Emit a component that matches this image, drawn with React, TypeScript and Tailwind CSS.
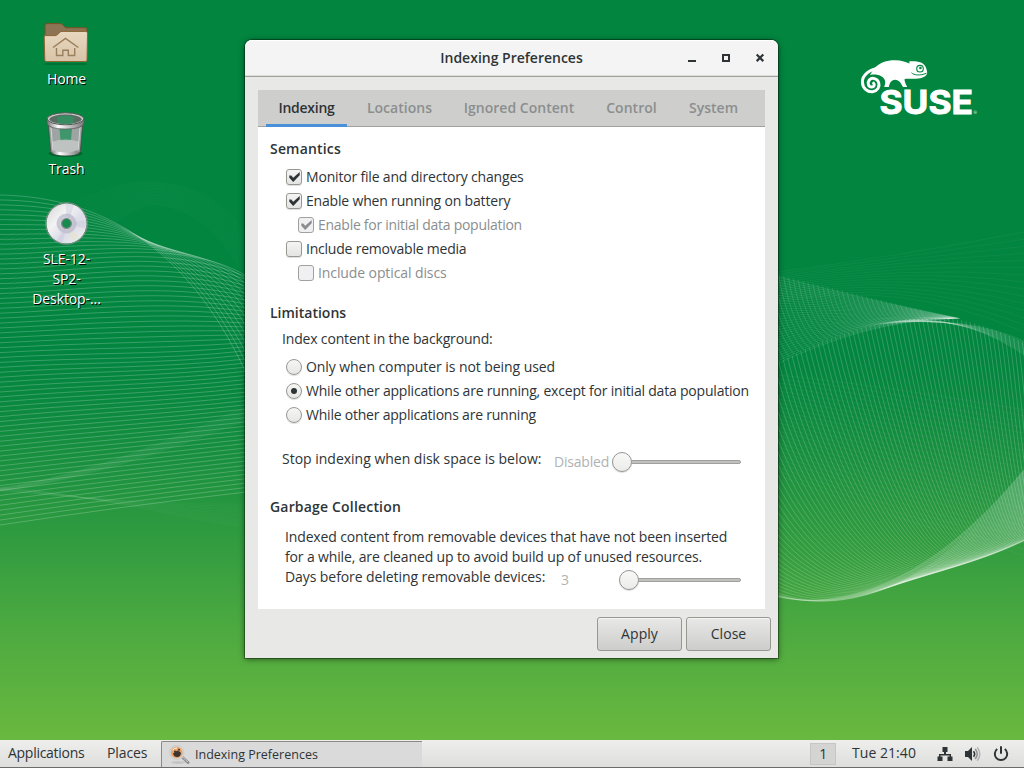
import type { ReactNode } from "react";

const lerp = (a: number, b: number, t: number) => a + (b - a) * t;
const range = (n: number) => Array.from({ length: n }, (_, i) => i / (n - 1));

const leftMesh = range(68).map((t) => {
  const y0 = 195 + 330 * t;
  const yEnd = t < 0.2 ? 275 + 98 * ((0.2 - t) / 0.2) ** 1.4 : 275 + 217 * ((t - 0.2) / 0.8) ** 1.1;
  const endSlope = t < 0.2 ? lerp(2, 0.5, t / 0.2) : lerp(0.5, -0.13, Math.min(1, (t - 0.2) / 0.3));
  const startSlope = lerp(0.02, -0.15, t);
  return `M0 ${y0} C82 ${y0 + 82 * startSlope} ${t < 0.2 ? 180 : 163} ${yEnd - 72 * endSlope} 246 ${yEnd}`;
});

const leftArcs = range(16).map(
  (t) => `M0 ${240 + t * 60} C60 ${212 + t * 60} 105 ${182 + t * 36} 150 ${182 + t * 22} C195 ${183 + t * 24} 225 ${204 + t * 30} 250 ${238 + t * 50}`,
);

const leftTail = range(12).map((t) => `M0 ${487 + t * 4} C90 ${494 + t * 4} 160 ${515 - t * 10} 250 ${528 - t * 24}`);
const leftRise = range(14).map((t) => `M0 ${488 + t * 3} C90 ${474 + t * 5} 170 ${440 + t * 10} 250 ${405 + t * 14}`);

const crest = (x: number) => (x < 940 ? 318 + ((940 - x) / 162) ** 2 * 45 : 318 + ((x - 940) / 84) ** 1.7 * 25);

const rightMesh = range(100).map((s) => {
  const x = 640 + 430 * s;
  const y = crest(Math.max(x, 660));
  return `M${x} ${y} C${x + lerp(40, 5, s)} ${y + lerp(150, 50, s)} ${860 + 215 * s ** 1.4} ${698 + 130 * s - 270 * s * s} 1050 ${lerp(436, 513, s)}`;
});

const crestLines = range(9).map((u) => `M${880 + u * 30} ${crest(880 + u * 30)} Q${965 + u * 8} ${314 + u * 5} 1026 ${342 + u * 14}`);

const wedgeMesh = range(34).map((u) => `M770 ${275 + 92 * u} Q${lerp(860, 865, u)} ${lerp(298, 321, u)} ${lerp(960, 950, u)} 318.5`);
const wedgeCross = range(40).map((u) => {
  const x = 730 + 190 * u;
  return `M${x} ${275 + (x - 778) * 0.245} Q${x + 8} ${325 + u * 5} ${x + 30} ${crest(x + 30)}`;
});

const faintRight = range(15).map((t) => `M778 ${272 + t * 30} Q900 ${256 + t * 22} 1024 ${232 + t * 100}`);
const faintBand = range(26).map((t) => `M778 ${375 + t * 100} Q880 ${385 + t * 130} 1024 ${410 + t * 145}`);

function Lines({ paths, opacity }: { paths: string[]; opacity: number }) {
  return (
    <g fill="none" stroke="#fff" strokeWidth="0.8" strokeOpacity={opacity}>
      {paths.map((d, i) => (
        <path key={i} d={d} />
      ))}
    </g>
  );
}

function SuseLogo() {
  return (
    <g fill="#fff">
      <path d="M874 68.5 C880 62 888 60 896 60.3 C901 60.5 905 61.8 909.5 63.6 L909.3 61.2 C914 61 918 61.3 921 62.6 C925 64.5 926.8 68 927.2 73 C926.8 76.5 922 78.5 916 78.7 C911 79 906 78.4 904.5 79.2 C904.5 82 906.2 84.5 907.2 87 L903 87 C901 83.5 899.5 80 895 79.8 C891 80 889.5 83.5 888.8 87 L884.2 87 C885 84 886 82 884.5 79.5 C883 76 877 73.5 870 75 Z" />
      <path
        d="M881 68.5 C869 68 862.2 76 862.4 82 C862.6 89 868 92.3 872.5 91.8 C877.5 91 880 86.8 878.7 82.6 C877.3 78.4 872 77 869.3 80 C866.8 83.3 868.6 87 871.8 87 C874 86.9 875 84.6 873.6 83.2"
        fill="none"
        stroke="#fff"
        strokeWidth="3"
        strokeLinecap="round"
      />
      <path d="M911.5 72.8 C914 75.2 920 76 926.5 73.2" fill="none" stroke="#02853f" strokeWidth="1" />
      <circle cx="920" cy="68.7" r="3.3" fill="#fff" stroke="#02853f" strokeWidth="1.1" />
      <circle cx="920.4" cy="68" r="1.3" fill="#02853f" />
      <text x="879.5" y="113.5" textLength="93.5" lengthAdjust="spacingAndGlyphs" stroke="#fff" strokeWidth="0.9" className="font-['Inter'] text-[32.5px] font-bold tracking-normal">
        SUSE
      </text>
      <text x="973.5" y="114" className="font-['Open_Sans'] text-[4px]">®</text>
    </g>
  );
}

function Wallpaper() {
  return (
    <svg className="absolute inset-0" width="1024" height="768" viewBox="0 0 1024 768">
      <defs>
        <linearGradient id="sky" x1="0" y1="0" x2="0" y2="1">
          <stop offset="0" stopColor="#02853f" />
          <stop offset="0.46" stopColor="#02853f" />
          <stop offset="0.52" stopColor="#09883f" />
          <stop offset="0.62" stopColor="#1e923f" />
          <stop offset="0.73" stopColor="#379f40" />
          <stop offset="0.82" stopColor="#4daa40" />
          <stop offset="0.96" stopColor="#69b83f" />
          <stop offset="1" stopColor="#69b83f" />
        </linearGradient>
      </defs>
      <rect width="1024" height="768" fill="url(#sky)" />
      <Lines paths={leftMesh} opacity={0.27} />
      <Lines paths={leftArcs} opacity={0.04} />
      <Lines paths={leftTail} opacity={0.04} />
      <Lines paths={leftRise} opacity={0.05} />
      <Lines paths={rightMesh} opacity={0.23} />
      <Lines paths={crestLines} opacity={0.16} />
      <Lines paths={wedgeMesh} opacity={0.13} />
      <Lines paths={wedgeCross} opacity={0.17} />
      <Lines paths={faintRight} opacity={0.06} />
      <Lines paths={faintBand} opacity={0.05} />
      <SuseLogo />
    </svg>
  );
}

function HomeIcon() {
  return (
    <svg className="mr-px" width="48" height="48" viewBox="0 0 48 48">
      <defs>
        <linearGradient id="folder" x1="0" y1="0" x2="0" y2="1">
          <stop offset="0" stopColor="#e8d8c0" />
          <stop offset="1" stopColor="#d8c4a8" />
        </linearGradient>
      </defs>
      <g transform="translate(-0.5 -1)">
        <path d="M3 46 h42" stroke="#00602c" strokeWidth="2" opacity=".5" />
        <path d="M3.5 7.5 q0-1.9 1.9-1.9 H19 q1.2 0 2 .9 L24 9.7 h20 q1.4 0 1.4 1.4 V24 H3.5 Z" fill="#8c7455" stroke="#7a4f22" />
        <path d="M4 17.6 H13.5 q1.5 0 2.5-1 l2.6-2.5 q.8-.7 2-.7 H44.2 q1.8 0 1.8 1.8 L45.5 42 q0 1.5-1.6 1.5 H4.8 q-1.5 0-1.5-1.5 L2.7 19 q0-1.4 1.3-1.4 Z" fill="url(#folder)" stroke="#8d6432" />
        <path d="M11.5 29.5 L24 20.5 L36.8 29.5" fill="none" stroke="#997f5d" strokeWidth="1.5" />
        <path d="M15 30 v7.5 h6.3 v-5.3 h5.5 v5.3 h6.4 V30" fill="none" stroke="#997f5d" strokeWidth="1.4" />
      </g>
    </svg>
  );
}

function TrashIcon() {
  return (
    <svg className="mr-px" width="48" height="48" viewBox="0 0 48 48">
      <defs>
        <linearGradient id="rim" x1="0" x2="1">
          <stop offset="0" stopColor="#777" />
          <stop offset=".3" stopColor="#fff" />
          <stop offset=".6" stopColor="#c4c4c4" />
          <stop offset="1" stopColor="#777" />
        </linearGradient>
        <pattern id="wire" width="2" height="2" patternUnits="userSpaceOnUse">
          <rect width="1" height="1" fill="#4f5a54" />
          <rect x="1" y="1" width="1" height="1" fill="#4f5a54" />
        </pattern>
      </defs>
      <g transform="translate(-0.5 0.5)">
        <ellipse cx="24" cy="44" rx="17" ry="3.5" fill="#003d1b" opacity=".45" />
        <path d="M6.5 11 L9.2 42 q2 4 14.8 4 t14.8-4 L41.5 11 Z" fill="#b4bab7" stroke="#444" strokeWidth=".8" />
        <path d="M18 19 h12.5 l-1 12 H19 Z" fill="#25a468" opacity=".85" />
        <path d="M11 32 q13-4 26 0 l-1 9 q-12 5-24 0 Z" fill="#ececec" opacity=".75" />
        <path d="M7 14 L9.2 42 q2 4 14.8 4 t14.8-4 L41 14 Z" fill="url(#wire)" opacity=".45" />
        <path d="M9.8 40 q14.2 6 28.4 0 l-.4 3 q-3 3-13.8 3 t-13.8-3 Z" fill="url(#rim)" />
        <path d="M9.5 18 l2 24 M38.5 18 l-2 24" stroke="#fff" opacity=".55" />
        <path d="M5.5 9.5 v4 q1 6 18.5 6 t18.5-6 v-4 Z" fill="url(#rim)" stroke="#555" strokeWidth=".7" />
        <ellipse cx="24" cy="9.3" rx="18.3" ry="6" fill="#c9cccb" stroke="#555" strokeWidth="1" />
        <ellipse cx="24" cy="9.8" rx="16" ry="4.7" fill="#5f7368" />
        <path d="M15 7.5 q9-2.5 18 0 l-1.5 6.3 q-7.5 1.2-15 0 Z" fill="#2f9c66" />
        <ellipse cx="24" cy="9.8" rx="16" ry="4.7" fill="url(#wire)" opacity=".5" />
      </g>
    </svg>
  );
}

function DiscIcon() {
  return (
    <svg className="mr-px" width="48" height="48" viewBox="0 0 48 48">
      <defs>
        <linearGradient id="disc" x1="0" y1="0" x2="1" y2="1">
          <stop offset="0" stopColor="#d4d4d6" />
          <stop offset=".35" stopColor="#f3f3f4" />
          <stop offset=".6" stopColor="#dcdce8" />
          <stop offset="1" stopColor="#f0f0ee" />
        </linearGradient>
      </defs>
      <g transform="translate(0.5 0)">
        <circle cx="24" cy="24.5" r="20" fill="url(#disc)" />
        <path d="M24.5 24.5 L23 4 A20.5 20.5 0 0 1 32 5.5 Z M24.5 24.5 L44 21 A20.5 20.5 0 0 1 44 30 Z M24.5 24.5 L14 42 A20.5 20.5 0 0 0 20 44.5 Z" fill="#c5c4d6" opacity=".4" />
        <path d="M25 25 L36 38 L30 42 Z" fill="#e6e3c4" opacity=".6" />
        <circle cx="24" cy="24.5" r="20.8" fill="none" stroke="#8b8b8b" />
        <circle cx="24" cy="24.5" r="8" fill="none" stroke="#b9b8ca" strokeWidth="4" opacity=".7" />
        <circle cx="24" cy="24.5" r="5" fill="#168b50" stroke="#8a8a8a" strokeWidth="1.2" />
      </g>
    </svg>
  );
}

function DesktopItem({ icon, lines }: { icon: ReactNode; lines: string[] }) {
  return (
    <div className="flex w-[101px] flex-col items-center">
      {icon}
      <div className="mt-[2px] text-center text-[14px] leading-[20px] tracking-[-0.1px] text-white [text-shadow:1px_1px_0_#000]">
        {lines.map((l) => (
          <div key={l}>{l}</div>
        ))}
      </div>
    </div>
  );
}

type CheckProps = { label: string; checked?: boolean; disabled?: boolean; indent?: boolean; className?: string };

function Check({ label, checked, disabled, indent, className = "" }: CheckProps) {
  return (
    <div className={`flex h-6 items-center gap-1 ${indent ? "pl-10" : "pl-7"} ${disabled ? "text-[#8b8e8f]" : ""}`}>
      <span
        className={`flex size-4 items-center justify-center rounded-[3px] border ${
          disabled ? "border-[#a0a09e] bg-[#f0f0f2]" : "border-[#989893] bg-linear-to-b from-[#f5f5f4] to-[#e4e4e2] shadow-[0_1px_1px_#00000022]"
        }`}
      >
        {checked && (
          <svg width="14" height="14" viewBox="0 0 14 14">
            <path d="M2.3 5.6 H4.3 L6.2 7.7 L12.7 2 V5.2 L6.2 12 L2.3 7.8 Z" fill={disabled ? "#8b8e8f" : "#2e3436"} />
          </svg>
        )}
      </span>
      <span className={`leading-[20px] whitespace-nowrap ${className}`}>{label}</span>
    </div>
  );
}

function Radio({ label, on, className = "" }: { label: string; on?: boolean; className?: string }) {
  return (
    <div className="flex h-6 items-center gap-1 pl-7">
      <span className="flex size-4 items-center justify-center rounded-full border border-[#989893] bg-linear-to-b from-[#f6f6f5] to-[#e6e6e4] shadow-[0_1px_1px_#00000022]">
        {on && <span className="size-1.5 rounded-full bg-[#2e3436]" />}
      </span>
      <span className={`leading-[20px] whitespace-nowrap ${className}`}>{label}</span>
    </div>
  );
}

function Slider({ className }: { className: string }) {
  return (
    <div className={`flex items-center ${className}`}>
      <span className="size-5 shrink-0 rounded-full border border-[#949490] bg-linear-to-b from-[#f8f8f7] to-[#ececea] shadow-[0_1px_1px_#00000026]" />
      <span className="-ml-px h-1 flex-1 rounded-r-full border border-[#a0a09c] bg-[#c0c0be]" />
    </div>
  );
}

function Heading({ children, className = "tracking-[0.18px]" }: { children: ReactNode; className?: string }) {
  return <h2 className={`h-6 pl-3 leading-[24px] font-semibold ${className}`}>{children}</h2>;
}

function PushButton({ children }: { children: ReactNode }) {
  return (
    <button className="flex h-[34px] w-[85px] items-center justify-center rounded-[3px] border border-[#989893] bg-linear-to-b from-[#e8e8e6] to-[#cdcdcb] pb-px text-[14px] tracking-[0.05px] shadow-[inset_0_1px_0_#f4f4f3]">
      {children}
    </button>
  );
}

function PreferencesWindow() {
  return (
    <div className="absolute top-10 left-[245px] flex h-[618px] w-[533px] flex-col rounded-t-[7px] bg-[#e8e8e6] shadow-[0_0_0_1px_rgba(0,0,0,0.32),0_1px_6px_rgba(0,0,0,0.55)]">
      <div className="flex h-[37px] items-center rounded-t-[7px] border-b border-[#a1a19e] bg-[#f4f4f4] shadow-[inset_0_1px_0_#fff,inset_0_-1px_0_#deded9]">
        <div className="flex-1 pb-px pl-[90px] text-center font-semibold tracking-normal">Indexing Preferences</div>
        <svg width="90" height="36" viewBox="0 0 90 36" fill="none" stroke="#2e3436" strokeWidth="2">
          <path d="M0 21 h8" />
          <rect x="35" y="15" width="6" height="6" />
          <path d="M68.7 14.5 l6.6 6.6 M75.3 14.5 l-6.6 6.6" strokeWidth="2.2" />
        </svg>
      </div>
      <div className="mx-[13px] mt-[13px] flex h-[37px] border-b border-[#a1a19e] bg-[#cececc] pl-2 font-semibold tracking-[0.03px] text-[#8b8e8f]">
        <div className="z-10 h-[37px] w-[81px] border-b-[3px] border-[#4a90d9] text-center leading-[35px] tracking-[-0.25px] text-[#2e3436]">Indexing</div>
        <div className="w-[105px] text-center leading-[35px]">Locations</div>
        <div className="w-[134px] text-center leading-[35px]">Ignored Content</div>
        <div className="w-[91px] text-center leading-[35px]">Control</div>
        <div className="w-[73px] text-center leading-[35px]">System</div>
      </div>
      <div className="mx-[13px] h-[482px] bg-white pt-[10px]">
        <Heading>Semantics</Heading>
        <div className="pt-1">
          <Check label="Monitor file and directory changes" checked className="tracking-[-0.18px]" />
          <Check label="Enable when running on battery" checked className="tracking-[-0.18px]" />
          <Check label="Enable for initial data population" checked disabled indent className="tracking-[-0.27px]" />
          <Check label="Include removable media" className="tracking-[-0.22px]" />
          <Check label="Include optical discs" disabled indent className="tracking-[-0.1px]" />
        </div>
        <div className="pt-4">
          <Heading className="tracking-normal">Limitations</Heading>
        </div>
        <p className="pt-0.5 pl-6 leading-[24px] tracking-[-0.17px]">Index content in the background:</p>
        <div className="pt-1">
          <Radio label="Only when computer is not being used" className="tracking-[-0.07px]" />
          <Radio label="While other applications are running, except for initial data population" on />
          <Radio label="While other applications are running" className="tracking-[-0.22px]" />
        </div>
        <div className="flex h-11 pt-5 pr-6 pl-6 leading-[24px] whitespace-nowrap">
          <span className="w-[272px] tracking-[-0.01px]">Stop indexing when disk space is below:</span>
          <span className="w-[58px] pt-[3px] text-[#b0b2b3]">Disabled</span>
          <Slider className="h-[30px] flex-1" />
        </div>
        <div className="pt-6">
          <Heading>Garbage Collection</Heading>
        </div>
        <div className="pt-2 pl-[27px] leading-[20px] tracking-[-0.14px] whitespace-nowrap">
          <p>Indexed content from removable devices that have not been inserted</p>
          <p>for a while, are cleaned up to avoid build up of unused resources.</p>
          <div className="flex pr-6">
            <span className="w-[276px] tracking-[-0.08px]">Days before deleting removable devices:</span>
            <span className="w-[58px] pt-[3px] text-[#b0b2b3]">3</span>
            <Slider className="h-[26px] flex-1" />
          </div>
        </div>
      </div>
      <div className="flex justify-end gap-1 pt-2 pr-[7px]">
        <PushButton>Apply</PushButton>
        <PushButton>Close</PushButton>
      </div>
    </div>
  );
}

function Panel() {
  return (
    <div className="absolute inset-x-0 bottom-0 flex h-7 items-center border-b border-[#6d6d6d] bg-linear-to-b from-[#eeeeed] to-[#dededc] text-[14px] tracking-[-0.28px] whitespace-nowrap">
      <span className="w-[107px] pb-0.5 pl-2">Applications</span>
      <span className="w-[54px] pb-0.5 tracking-[-0.1px]">Places</span>
      <div className="mt-px flex h-[26px] w-[261px] items-center rounded-tl-[2px] border-t border-l border-[#8a8a88] bg-[#dadada] pl-1.5 text-[12.5px] tracking-normal">
        <svg width="22" height="20" viewBox="0 0 22 20">
          <ellipse cx="10" cy="17.5" rx="7" ry="1.5" fill="#c4c4c2" />
          <path d="M13.5 11.5 L20 17.5" stroke="#8e8e8e" strokeWidth="3" strokeLinecap="round" />
          <path d="M14 11.5 L20 17" stroke="#c8c8c8" strokeWidth="1" />
          <circle cx="8.7" cy="7.5" r="6.8" fill="#f0a060" stroke="#d0d0ce" strokeWidth="2" />
          <path d="M5 8.5 q3-2.5 4.5-3 q3 1 3.5 2.5 q-.5 3.5-3 4 q-4 .5-5-3.5Z" fill="#3a3533" />
          <path d="M4.5 5.2 q2-2.4 4.5-2.2" stroke="#fff" fill="none" />
          <circle cx="7" cy="6.5" r="1" fill="#3a3533" />
          <circle cx="11" cy="4.8" r="1" fill="#3a3533" />
        </svg>
        <span className="pt-px pl-[5px]">Indexing Preferences</span>
      </div>
      <div className="ml-auto flex items-center">
        <span className="flex h-[22px] w-[26px] items-center justify-center border border-[#c6c6c4] bg-[#d4d4d3] pb-px">1</span>
        <span className="w-[101px] pb-0.5 pl-4 tracking-[0.05px]">Tue 21:40</span>
        <svg width="16" height="16" viewBox="0 0 16 16" fill="#2e3436">
          <path d="M5.5 1h5v5H9v2h5v2.5h1.5V15h-5v-4.5H12.5V9.5h-9v1H5.5V15h-5v-4.5H2V8h5V6H5.5z" />
        </svg>
        <svg className="ml-3" width="16" height="16" viewBox="0 0 16 16" fill="none">
          <path d="M0 5h3l4-4v14l-4-4H0z" fill="#2e3436" />
          <path d="M8.5 5.2 q2.3 2.8 0 5.6" stroke="#2e3436" strokeWidth="1.6" />
          <path d="M10.2 3 q4 5 0 10" stroke="#8d9091" strokeWidth="1.5" />
          <path d="M12.2 1.2 q5.2 6.8 0 13.6" stroke="#b3b5b5" strokeWidth="1.5" />
        </svg>
        <svg className="mr-[15px] ml-3" width="16" height="16" viewBox="0 0 16 16" fill="none" stroke="#2e3436" strokeWidth="2">
          <path d="M4.2 3 A6.2 6.2 0 1 0 11.8 3" />
          <path d="M8 1 v6" strokeLinecap="round" />
        </svg>
      </div>
    </div>
  );
}

export default function App() {
  return (
    <div className="relative h-[768px] w-[1024px] overflow-hidden font-['Open_Sans','Noto_Sans',sans-serif] text-[14px] tracking-[-0.2px] text-[#2e3436]">
      <Wallpaper />
      <div className="absolute top-[19px] left-4 flex flex-col gap-5">
        <DesktopItem icon={<HomeIcon />} lines={["Home"]} />
        <DesktopItem icon={<TrashIcon />} lines={["Trash"]} />
        <DesktopItem icon={<DiscIcon />} lines={["SLE-12-", "SP2-", "Desktop-..."]} />
      </div>
      <PreferencesWindow />
      <Panel />
    </div>
  );
}
